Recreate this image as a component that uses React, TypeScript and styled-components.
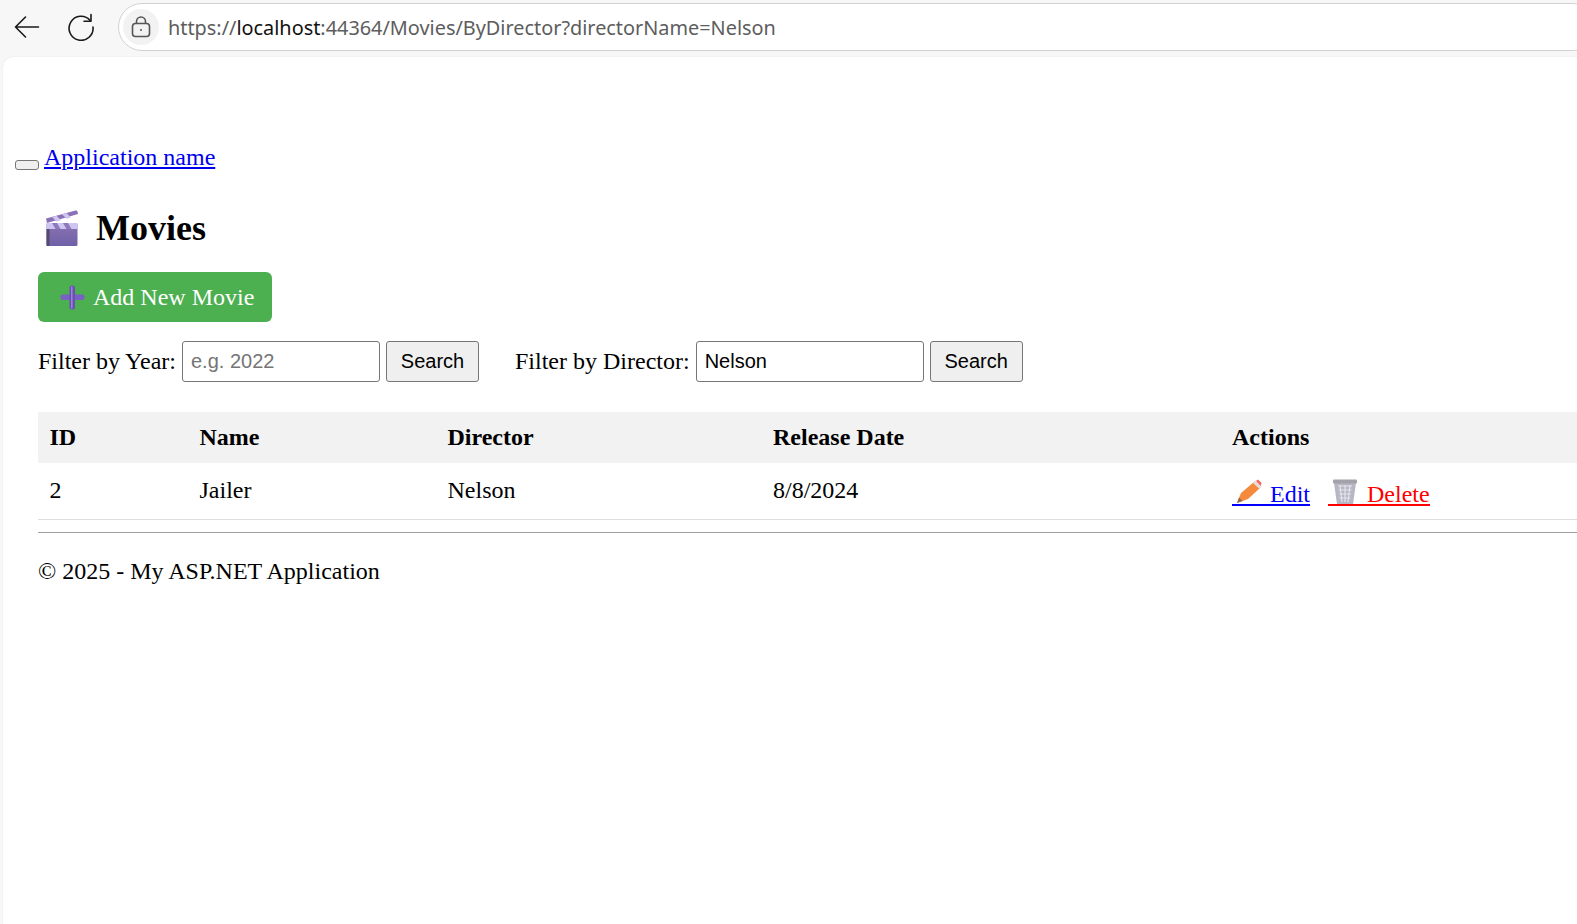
import React from 'react';
import styled, {createGlobalStyle} from 'styled-components';

const GlobalStyle = createGlobalStyle`
  html, body {
    margin: 0;
    padding: 0;
    height: 100%;
    overflow: hidden;
    background: #f7f7f7;
  }
  #root {
    height: 100%;
  }
`;

const Shell = styled.div`
  width: 1577px;
  height: 924px;
  display: flex;
  flex-direction: column;
  overflow: hidden;
  background: #f7f7f7;
`;

const BrowserBar = styled.div`
  height: 57px;
  flex: none;
  display: flex;
  align-items: center;
  padding: 0 0 3px 13px;
  box-sizing: border-box;
  font-family: "Noto Sans", "Open Sans", sans-serif;
`;

const NavIcon = styled.svg`
  flex: none;
  width: 28px;
  height: 28px;
  margin-right: ${p => p.$gap}px;
  fill: none;
  stroke: #1a1a1a;
  stroke-width: 1.6;
`;

const UrlPill = styled.div`
  flex: 1;
  height: 48px;
  margin-right: -20px;
  display: flex;
  align-items: center;
  box-sizing: border-box;
  padding-left: 4px;
  background: #fff;
  border: 1.5px solid #d2d2d2;
  border-radius: 24px;
  font-size: 19.87px;
  color: #5d5d5d;
`;

const LockBadge = styled.span`
  width: 36px;
  height: 36px;
  margin-right: 9px;
  border-radius: 50%;
  background: #f2f2f2;
  display: flex;
  align-items: center;
  justify-content: center;
`;

const Host = styled.span`
  color: #111;
`;

const Page = styled.div`
  flex: 1;
  margin-left: 3px;
  background: #fff;
  border-top-left-radius: 10px;
  box-shadow: 0 0 1px #d5d5d5;
  font-family: "Liberation Serif", "Times New Roman", serif;
  font-size: 24px;
  color: #000;
  overflow: hidden;
`;

const NavBar = styled.div`
  padding: 85px 0 0 12px;
  height: 30px;
  line-height: 30px;
`;

const Toggle = styled.button`
  width: 24px;
  height: 10px;
  padding: 0;
  margin-right: 5px;
  box-sizing: border-box;
  background: #efefef;
  border: 1px solid #767676;
  border-radius: 3px;
  vertical-align: -4px;
`;

const BrandLink = styled.a`
  color: #00e;
  text-decoration: underline;
`;

const Content = styled.div`
  padding-left: 35px;
  width: 1600px;
`;

const Title = styled.h2`
  margin: 31px 0 0;
  display: flex;
  align-items: center;
  height: 50px;
  font-size: 36px;
  font-weight: bold;
`;

const ClapIcon = styled.svg`
  width: 32px;
  height: 36px;
  margin: 0 18px 0 8px;
`;

const AddButton = styled.a`
  margin-top: 19px;
  width: 234px;
  height: 50px;
  display: flex;
  align-items: center;
  box-sizing: border-box;
  padding-left: 22px;
  background: #4caf50;
  border-radius: 6px;
  color: #fff;
  text-decoration: none;
`;

const PlusIcon = styled.svg`
  width: 25px;
  height: 25px;
  margin-right: 8px;
`;

const Filters = styled.div`
  margin-top: 19px;
  height: 41px;
  display: flex;
  align-items: center;
  white-space: pre;
`;

const FilterForm = styled.form`
  display: flex;
  align-items: center;
  gap: 6px;
  margin-right: 36px;
`;

const FilterInput = styled.input`
  width: ${p => p.$w}px;
  height: 41px;
  box-sizing: border-box;
  padding: 0 8px;
  font-family: "Liberation Sans", Arial, sans-serif;
  font-size: 20px;
  color: #000;
  background: #fff;
  border: 1px solid #767676;
  border-radius: 3px;
  &::placeholder {
    color: #757575;
    opacity: 1;
  }
`;

const SearchButton = styled.button`
  width: 93px;
  height: 41px;
  padding: 0;
  font-family: "Liberation Sans", Arial, sans-serif;
  font-size: 20px;
  color: #000;
  background: #efefef;
  border: 1px solid #767676;
  border-radius: 3px;
`;

const MovieTable = styled.table`
  margin-top: 30px;
  width: 1539.5px;
  table-layout: fixed;
  border-collapse: collapse;
`;

const HeadCell = styled.th`
  height: 51px;
  padding: 0 11.5px;
  box-sizing: border-box;
  background: #f2f2f2;
  text-align: left;
  font-weight: bold;
`;

const Cell = styled.td`
  height: 56px;
  padding: 0 11.5px;
  box-sizing: border-box;
  border-bottom: 1px solid #ddd;
`;

const ActionCell = styled(Cell)`
  padding-top: 3px;
`;

const ActionRow = styled.div`
  display: flex;
  gap: 18px;
`;

const ActionLink = styled.a`
  display: flex;
  align-items: flex-end;
  line-height: 20px;
  color: ${p => p.$color};
  border-bottom: 2px solid ${p => p.$color};
  text-decoration: none;
`;

const RowIcon = styled.svg`
  width: 26px;
  height: 25px;
  margin: 0 ${p => p.$gap}px 0 4px;
`;

const Rule = styled.hr`
  margin: 12px 0 0;
  height: 0;
  border: none;
  border-top: 1.5px solid #a0a0a0;
`;

const Footer = styled.p`
  margin: 24px 0 0;
  line-height: 28px;
`;

const columns = [150, 248, 325.5, 459, 357];

const App = () => {
  return (
    <Shell>
      <GlobalStyle />
      <BrowserBar>
        <NavIcon $gap={26} viewBox="0 0 28 28" strokeLinecap="round" strokeLinejoin="round">
          <path d="M2.500 14h23M12.500 4 2.500 14l10 10" />
        </NavIcon>
        <NavIcon $gap={23} viewBox="0 0 28 28" strokeLinecap="round" strokeLinejoin="round">
          <path d="M23.200 7.500A12 12 0 1 0 26 14" />
          <path d="M24 1.500v6.800h-7" />
        </NavIcon>
        <UrlPill>
          <LockBadge>
            <svg width="20" height="22" viewBox="0 0 20 22" fill="none" stroke="#555" strokeWidth="1.600">
              <rect x="1.500" y="7.500" width="17" height="13" rx="3" />
              <path d="M5.500 7.500V5.500a4.500 4.500 0 0 1 9 0v2" />
              <circle cx="10" cy="14" r="1" fill="#555" stroke="none" />
            </svg>
          </LockBadge>
          <span>https://<Host>localhost</Host>:44364/Movies/ByDirector?directorName=Nelson</span>
        </UrlPill>
      </BrowserBar>
      <Page>
        <NavBar>
          <Toggle type="button" />
          <BrandLink href="#">Application name</BrandLink>
        </NavBar>
        <Content>
          <Title>
            <ClapIcon viewBox="0 0 32 36">
              <defs>
                <linearGradient id="clapBody" x1="0" y1="0" x2="0" y2="1">
                  <stop offset="0" stopColor="#8a74b0" />
                  <stop offset="1" stopColor="#6f60a8" />
                </linearGradient>
              </defs>
              <path d="M0 8.500 29.500 0.500q1.500-.2 2 1l.5 2.500L1 13Z" fill="#8a72b8" />
              <path d="m6 7 4.500 4.500 4.500-1.300L10.500 5.800Zm10-2.800 4.500 4.500 4.500-1.300-4.500-4.500Z" fill="#cfc5ee" />
              <rect x="0.500" y="13" width="31" height="23" rx="1.500" fill="url(#clapBody)" />
              <rect x="0.500" y="13" width="31" height="6" fill="#cfc5f2" />
              <path d="m6 13 3.500 6h5L11 13Zm11 0 3.500 6h5L22 13Z" fill="#8f79bd" />
              <rect x="0.500" y="19" width="3" height="17" fill="#564a70" />
            </ClapIcon>
            Movies
          </Title>
          <AddButton href="#">
            <PlusIcon viewBox="0 0 25 25">
              <rect x="0.500" y="9.500" width="24" height="5.500" rx="2.500" fill="#7a5fc4" />
              <rect x="9.500" y="0.500" width="5.500" height="24" rx="2.500" fill="#6a50b5" />
              <rect x="11" y="1.500" width="1.500" height="22" fill="#9883dc" />
            </PlusIcon>
            Add New Movie
          </AddButton>
          <Filters>
            <FilterForm>
              Filter by Year:
              <FilterInput $w={198} placeholder="e.g. 2022" />
              <SearchButton type="button">Search</SearchButton>
            </FilterForm>
            <FilterForm>
              Filter by Director:
              <FilterInput $w={228} defaultValue="Nelson" />
              <SearchButton type="button">Search</SearchButton>
            </FilterForm>
          </Filters>
          <MovieTable>
            <colgroup>
              {columns.map((w, i) => <col key={i} style={{width: w}} />)}
            </colgroup>
            <thead>
              <tr>
                <HeadCell>ID</HeadCell>
                <HeadCell>Name</HeadCell>
                <HeadCell>Director</HeadCell>
                <HeadCell>Release Date</HeadCell>
                <HeadCell>Actions</HeadCell>
              </tr>
            </thead>
            <tbody>
              <tr>
                <Cell>2</Cell>
                <Cell>Jailer</Cell>
                <Cell>Nelson</Cell>
                <Cell>8/8/2024</Cell>
                <ActionCell>
                  <ActionRow>
                    <ActionLink href="#" $color="#00f">
                      <RowIcon $gap={8} viewBox="0 0 26 25">
                        <path d="M1 24 5 14 18 3l6 6L12 20Z" fill="#f58a3c" />
                        <path d="m20 2 2-1.500 3.500 3.500-1 3.500Z" fill="#f4665a" />
                        <path d="m17 4 6.500 6 2-2.500-6.500-6Z" fill="#eadcdc" />
                        <path d="M1 24 3 18.500 6.500 22Z" fill="#8a6a52" />
                      </RowIcon>
                      Edit
                    </ActionLink>
                    <ActionLink href="#" $color="#f00">
                      <RowIcon $gap={9} viewBox="0 0 26 25">
                        <path d="M2 4h22l-3 21H5Z" fill="#b7b6c4" />
                        <rect x="1" y="0.500" width="24" height="4" rx="1" fill="#a3a2aa" />
                        <path d="M6 7h14M6.500 11h13M7 15h12M7.500 19h11M8 6l2 17M13 6v17M18 6l-2 17" stroke="#e4e4ec" strokeWidth="1.200" fill="none" />
                      </RowIcon>
                      Delete
                    </ActionLink>
                  </ActionRow>
                </ActionCell>
              </tr>
            </tbody>
          </MovieTable>
          <Rule />
          <Footer>© 2025 - My ASP.NET Application</Footer>
        </Content>
      </Page>
    </Shell>
  );
};

export default App;
